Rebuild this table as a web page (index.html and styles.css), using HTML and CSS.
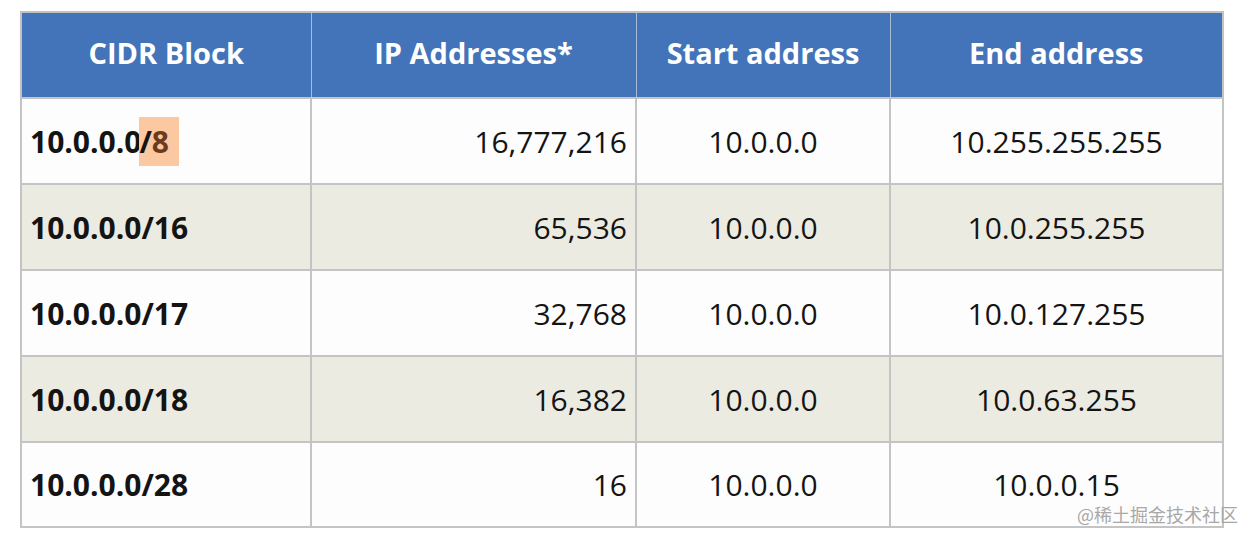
FILE: index.html
```html
<!DOCTYPE html>
<html lang="en">
<head>
<meta charset="utf-8">
<title>CIDR Blocks</title>
<link rel="stylesheet" href="styles.css">
</head>
<body>
<main class="page">
  <table class="cidr">
    <colgroup>
      <col class="c1"><col class="c2"><col class="c3"><col class="c4">
    </colgroup>
    <thead>
      <tr>
        <th>CIDR Block</th>
        <th>IP Addresses*</th>
        <th>Start address</th>
        <th>End address</th>
      </tr>
    </thead>
    <tbody>
      <tr>
        <td class="block">10.0.0.0<span class="hl">/<span class="mask">8</span></span></td>
        <td class="num">16,777,216</td>
        <td class="addr">10.0.0.0</td>
        <td class="addr">10.255.255.255</td>
      </tr>
      <tr class="alt">
        <td class="block">10.0.0.0/16</td>
        <td class="num">65,536</td>
        <td class="addr">10.0.0.0</td>
        <td class="addr">10.0.255.255</td>
      </tr>
      <tr>
        <td class="block">10.0.0.0/17</td>
        <td class="num">32,768</td>
        <td class="addr">10.0.0.0</td>
        <td class="addr">10.0.127.255</td>
      </tr>
      <tr class="alt">
        <td class="block">10.0.0.0/18</td>
        <td class="num">16,382</td>
        <td class="addr">10.0.0.0</td>
        <td class="addr">10.0.63.255</td>
      </tr>
      <tr class="last">
        <td class="block">10.0.0.0/28</td>
        <td class="num">16</td>
        <td class="addr">10.0.0.0</td>
        <td class="addr">10.0.0.15</td>
      </tr>
    </tbody>
  </table>
  <div class="watermark">@稀土掘金技术社区</div>
</main>
</body>
</html>
```
FILE: styles.css
```css
html, body {
  margin: 0;
  padding: 0;
  background: #ffffff;
}
.page {
  position: relative;
  width: 1255px;
  height: 541px;
  padding: 11px 0 0 20px;
  box-sizing: border-box;
  font-family: "Open Sans", "Noto Sans", sans-serif;
}
.cidr {
  border-collapse: collapse;
  table-layout: fixed;
  width: 1202px;
  border: 2px solid #c2c2c2;
}
.c1 { width: 290px; }
.c2 { width: 325px; }
.c3 { width: 254px; }
.c4 { width: 333px; }
.cidr th {
  background: #4374b9;
  color: #ffffff;
  font-weight: 700;
  font-size: 29px;
  height: 79px;
  padding: 0 0 5px 0;
  border: 1px solid #a9bcd6;
  text-align: center;
  vertical-align: middle;
}
.cidr td {
  height: 84px;
  padding: 0 8px 0 8px;
  border: 2px solid #c4c4c4;
  font-size: 30px;
  color: #141414;
  vertical-align: middle;
  background: #fdfdfd;
}
.cidr tr.last td {
  height: 83px;
}
.cidr tr.alt td {
  background: #ecebe2;
}
.block {
  font-weight: 700;
  text-align: left;
}
.num { text-align: right; }
.addr { text-align: center; }
.hl {
  display: inline-block;
  background: #fcc8a2;
  padding: 4px 10px 4px 0;
  margin: -4px 0 -4px -2px;
}
.mask { color: #6b3b1a; }
.watermark {
  position: absolute;
  left: 1077px;
  top: 501px;
  font-family: "Noto Sans CJK SC", sans-serif;
  font-size: 18px;
  color: #a8a8a8;
  white-space: nowrap;
}
```
